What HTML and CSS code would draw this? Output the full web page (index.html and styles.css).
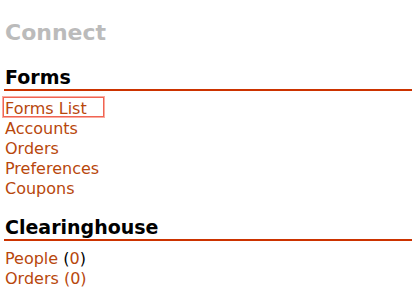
FILE: index.html
```html
<!DOCTYPE html>
<html>
<head>
<meta charset="utf-8">
<link rel="stylesheet" href="styles.css">
</head>
<body>
<div class="page">
  <h1 class="title">Connect</h1>
  <section class="block">
    <h2 class="heading">Forms</h2>
    <ul class="links">
      <li class="item item-hl"><a href="#">Forms List</a><span class="hl"></span></li>
      <li class="item"><a href="#">Accounts</a></li>
      <li class="item"><a href="#">Orders</a></li>
      <li class="item"><a href="#">Preferences</a></li>
      <li class="item"><a href="#">Coupons</a></li>
    </ul>
  </section>
  <section class="block block-2">
    <h2 class="heading">Clearinghouse</h2>
    <ul class="links">
      <li class="item"><a href="#">People</a> (<a href="#">0</a>)</li>
      <li class="item"><a href="#">Orders (0)</a></li>
    </ul>
  </section>
</div>
</body>
</html>
```

FILE: styles.css
```css
html, body {
  margin: 0;
  padding: 0;
  background: #ffffff;
}
body {
  font-family: "DejaVu Sans", Verdana, sans-serif;
  color: #000;
}
.page {
  padding: 19.5px 4px 0 4px;
}
.title {
  margin: 0 0 20px 0;
  font-size: 22px;
  line-height: 26px;
  font-weight: bold;
  color: #bbbbbb;
  padding-left: 1px;
}
.heading {
  margin: 0 0 8px 0;
  font-size: 19px;
  line-height: 22px;
  font-weight: bold;
  color: #000;
  padding: 0 0 1px 1px;
  border-bottom: 2px solid #cc3300;
}
.block-2 {
  margin-top: 17.5px;
}
.links {
  list-style: none;
  margin: 0;
  padding: 0 0 0 1px;
}
.item {
  font-size: 16px;
  line-height: 20px;
  color: #000;
}
.item a {
  color: #b8470c;
  text-decoration: none;
}
.item-hl {
  position: relative;
}
.hl {
  position: absolute;
  left: -2px;
  top: -1.5px;
  width: 99px;
  height: 18px;
  border: 1px solid #f06453;
  outline: 1px solid #f9aca0;
  outline-offset: 0;
}
```
